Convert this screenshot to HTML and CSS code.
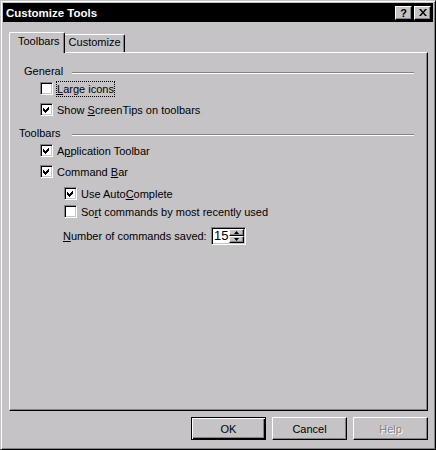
FILE: index.html
```html
<html>
<head>
<title>Customize Tools</title>
<link rel="stylesheet" href="styles.css">
</head>
<body>
<div class="window">
	<div class="titlebar">
		<span class="title">Customize Tools</span>
		<span class="cap-btn cap-help">?</span>
		<span class="cap-btn cap-close">
			<svg width="8" height="7" viewBox="0 0 8 7"><path d="M0 0h2l2 2.5L6 0h2L5 3.5 8 7H6L4 4.5 2 7H0l3-3.5z"/></svg>
		</span>
	</div>

	<div class="tabs">
		<div class="tab active">Toolbars</div>
		<div class="tab">Customize</div>
	</div>

	<div class="panel">
		<div class="group-head head-general"><span>General</span><i class="rule"></i></div>
		<div class="row first">
			<span class="box"></span>
			<span class="label focus"><u>L</u>arge icons</span>
		</div>
		<div class="row">
			<span class="box checked"><svg width="7" height="7" viewBox="0 0 7 7"><path d="M0 2l2 2 4-4v3l-4 4-2-2z"/></svg></span>
			<span class="label">Show <u>S</u>creenTips on toolbars</span>
		</div>

		<div class="group-head head-toolbars"><span>Toolbars</span><i class="rule"></i></div>
		<div class="row first">
			<span class="box checked"><svg width="7" height="7" viewBox="0 0 7 7"><path d="M0 2l2 2 4-4v3l-4 4-2-2z"/></svg></span>
			<span class="label">A<u>p</u>plication Toolbar</span>
		</div>
		<div class="row">
			<span class="box checked"><svg width="7" height="7" viewBox="0 0 7 7"><path d="M0 2l2 2 4-4v3l-4 4-2-2z"/></svg></span>
			<span class="label">Command <u>B</u>ar</span>
		</div>
		<div class="row sub sub-first">
			<span class="box checked"><svg width="7" height="7" viewBox="0 0 7 7"><path d="M0 2l2 2 4-4v3l-4 4-2-2z"/></svg></span>
			<span class="label">Use Auto<u>C</u>omplete</span>
		</div>
		<div class="row sub">
			<span class="box"></span>
			<span class="label">So<u>r</u>t commands by most recently used</span>
		</div>

		<div class="count-row">
			<span class="count-label"><u>N</u>umber of commands saved:</span>
			<span class="spinner">
				<span class="spin-value">15</span>
				<span class="spin-btns">
					<span class="spin-btn"><svg width="5" height="3" viewBox="0 0 5 3"><path d="M2.5 0L5 3H0z"/></svg></span>
					<span class="spin-btn"><svg width="5" height="3" viewBox="0 0 5 3"><path d="M0 0h5L2.5 3z"/></svg></span>
				</span>
			</span>
		</div>
	</div>

	<div class="buttons">
		<span class="btn default">OK</span>
		<span class="btn">Cancel</span>
		<span class="btn disabled">Help</span>
	</div>
</div>
</body>
</html>
```

FILE: styles.css
```css
* {
  margin: 0;
  padding: 0;
  box-sizing: border-box;
}

body {
  font-family: "Liberation Sans", Arial, sans-serif;
  font-size: 11px;
  color: #000;
  background: #c6c3c6;
}

.window {
  width: 436px;
  height: 450px;
  background: #c6c3c6;
  border: 1px solid;
  border-color: #c6c3c6 #000 #000 #c6c3c6;
  box-shadow: inset 1px 1px #fff, inset -1px -1px #848284;
  padding: 2px;
}

/* title bar */
.titlebar {
  height: 19px;
  background: #000;
  display: flex;
  align-items: center;
  padding: 0 2px 0 3px;
}

.title {
  color: #fff;
  font-weight: bold;
  font-size: 11.5px;
}

.cap-btn {
  width: 17px;
  height: 14px;
  background: #c6c3c6;
  border: 1px solid;
  border-color: #fff #000 #000 #fff;
  box-shadow: inset -1px -1px #848284;
  display: flex;
  align-items: center;
  justify-content: center;
  font-weight: bold;
  font-size: 11px;
  line-height: 12px;
}

.cap-help {
  margin-left: auto;
}

.cap-close {
  margin-left: 2px;
}

/* tabs */
.tabs {
  display: flex;
  align-items: flex-end;
  height: 20px;
  margin: 10px 0 0 6px;
}

.tab {
  height: 18px;
  line-height: 13px;
  padding: 1px 3px 0 4px;
  border-top: 1px solid #fff;
  border-right: 1px solid #000;
  border-top-right-radius: 2px;
  box-shadow: inset -1px 0 #848284;
}

.tab.active {
  position: relative;
  z-index: 1;
  height: 21px;
  margin-bottom: -1px;
  padding: 2px 4px 0 8px;
  background: #c6c3c6;
  border-left: 1px solid #fff;
  border-top-left-radius: 2px;
}

/* tab page */
.panel {
  height: 359px;
  margin: 0 5px 0 6px;
  padding: 12px 13px 0 0;
  border: 1px solid;
  border-color: #fff #000 #000 #fff;
  box-shadow: inset -1px -1px #848284;
}

.group-head {
  display: grid;
  grid-template-columns: 62px 1fr;
  height: 13px;
  line-height: 13px;
}

.head-general span {
  padding-left: 14px;
}

.head-toolbars {
  margin-top: 11px;
}

.head-toolbars span {
  padding-left: 9px;
}

.rule {
  display: block;
  height: 2px;
  margin-top: 7px;
  border-top: 1px solid #848284;
  border-bottom: 1px solid #fff;
}

.row {
  display: flex;
  align-items: center;
  height: 13px;
  padding-left: 30px;
  margin-top: 8px;
}

.row.first {
  margin-top: 4px;
}

.row.sub {
  padding-left: 54px;
  margin-top: 5px;
}

.row.sub-first {
  margin-top: 9px;
}

.box {
  width: 13px;
  height: 13px;
  flex: none;
  background: #fff;
  border: 1px solid;
  border-color: #848284 #fff #fff #848284;
  box-shadow: inset 1px 1px #000, inset -1px -1px #c6c3c6;
  display: flex;
  align-items: center;
  justify-content: center;
}

.box svg {
  shape-rendering: crispEdges;
}

.label {
  margin-left: 3px;
  border: 1px solid transparent;
  line-height: 14px;
  white-space: nowrap;
}

.label.focus {
  border: 1px dotted #000;
}

/* spinner row */
.count-row {
  display: flex;
  align-items: center;
  margin-top: 9px;
  padding-left: 53px;
}

.count-label {
  width: 148px;
}

.spinner {
  width: 35px;
  height: 18px;
  display: flex;
  background: #fff;
  border: 1px solid;
  border-color: #848284 #fff #fff #848284;
  box-shadow: inset 1px 1px #000, inset -1px -1px #c6c3c6;
  padding: 1px 1px 1px 2px;
}

.spin-value {
  flex: 1;
  font-size: 13px;
  line-height: 14px;
}

.spin-btns {
  width: 15px;
  display: flex;
  flex-direction: column;
}

.spin-btn {
  flex: 1;
  background: #c6c3c6;
  border: 1px solid;
  border-color: #fff #000 #000 #fff;
  box-shadow: inset -1px -1px #848284;
  display: flex;
  align-items: center;
  justify-content: center;
}

/* dialog buttons */
.buttons {
  display: flex;
  justify-content: flex-end;
  gap: 6px;
  margin-top: 6px;
  padding-right: 5px;
}

.btn {
  width: 75px;
  height: 23px;
  display: flex;
  align-items: center;
  justify-content: center;
  border: 1px solid;
  border-color: #fff #000 #000 #fff;
  box-shadow: inset -1px -1px #848284;
}

.btn.default {
  border: 1px solid #000;
  box-shadow: inset 1px 1px #fff, inset -1px -1px #000, inset -2px -2px #848284;
}

.btn.disabled {
  color: #848284;
  text-shadow: 1px 1px #fff;
}
```
